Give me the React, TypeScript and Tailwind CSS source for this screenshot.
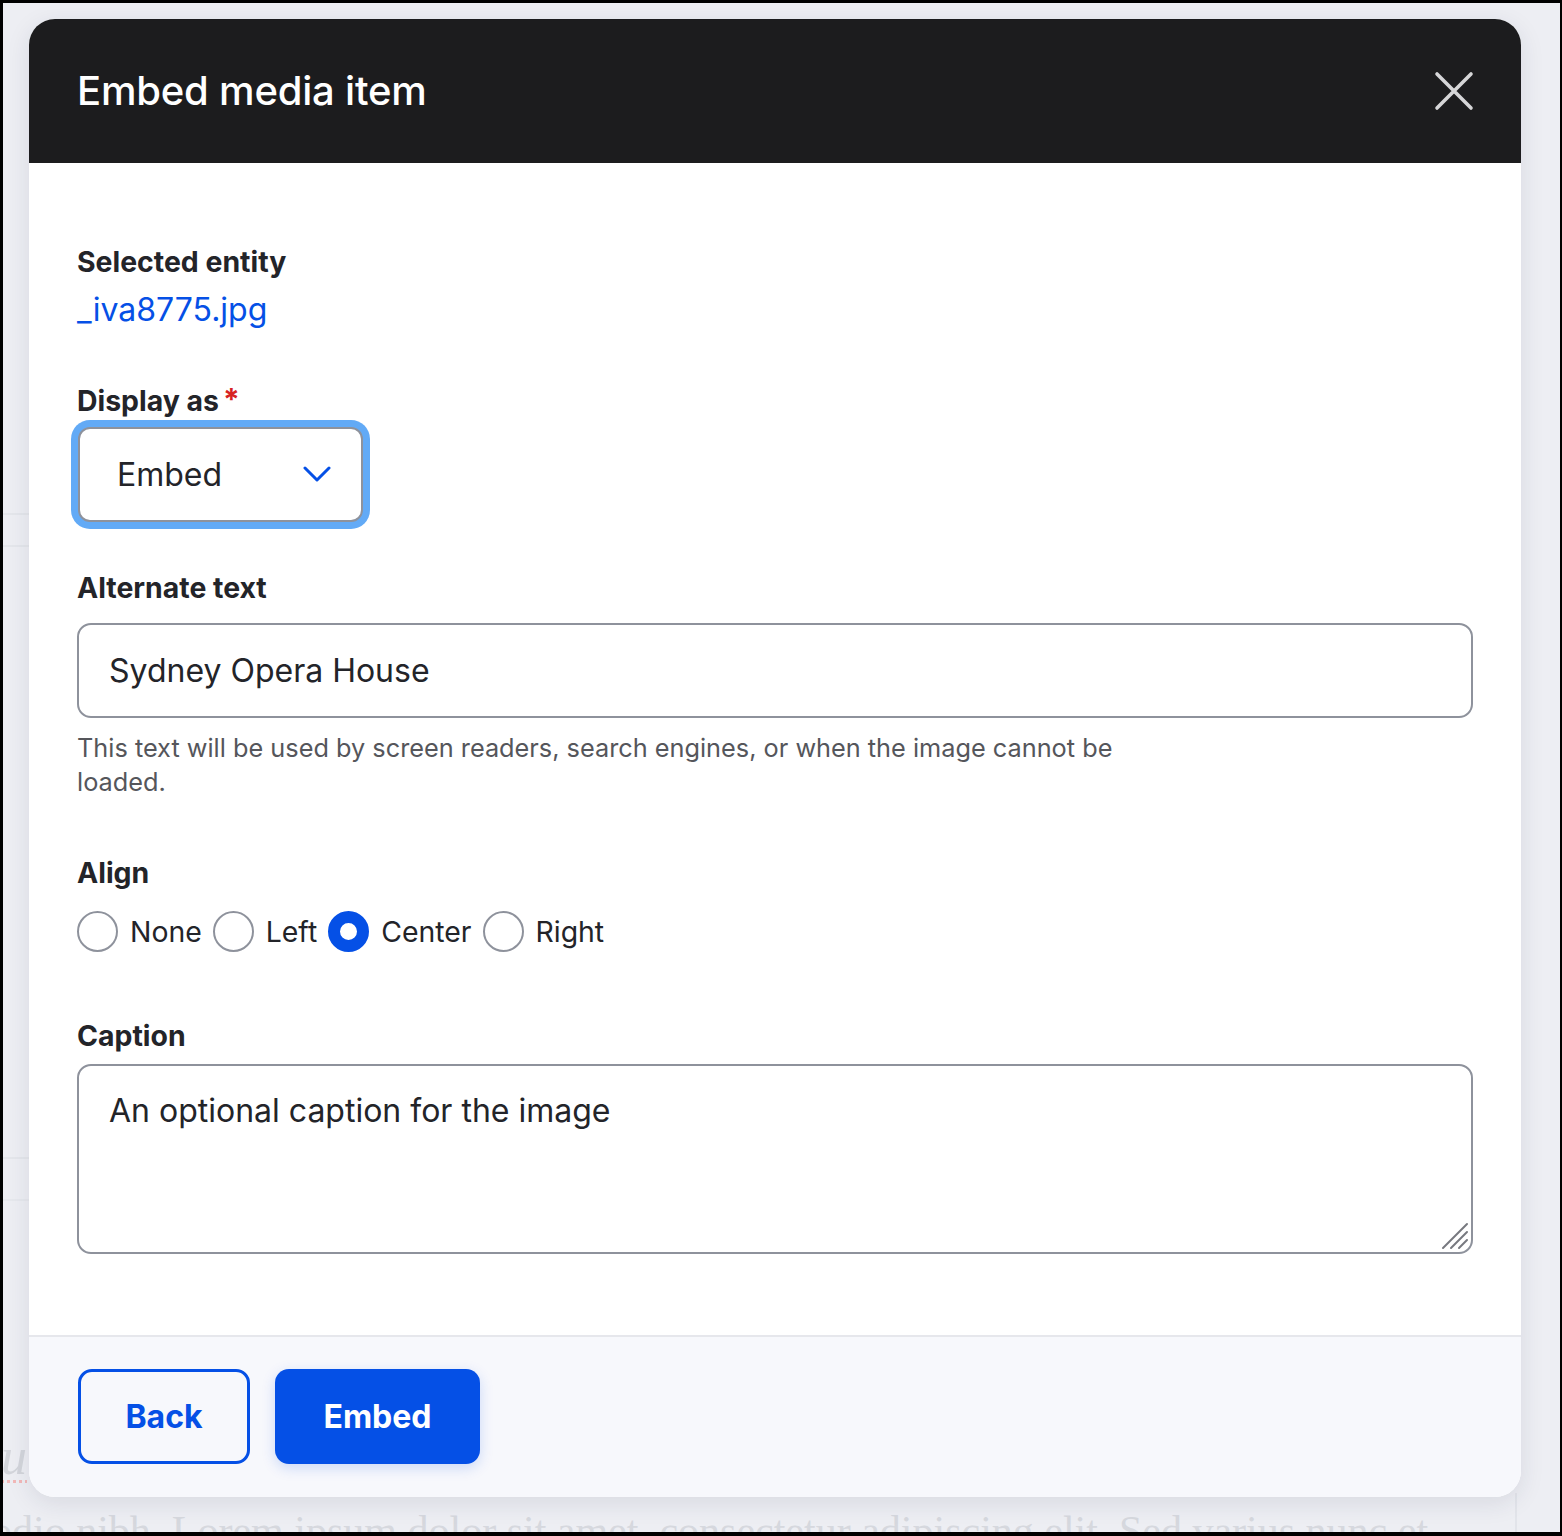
import React from "react";

const font = { fontFamily: "Inter, 'Noto Sans', sans-serif" };

function Radio({ label, checked }: { label: string; checked?: boolean }) {
  return (
    <label className="flex items-center gap-[12px]">
      <span
        className={
          checked
            ? "block w-[41px] h-[41px] rounded-full border-[12px] border-[#0550e6] bg-white"
            : "block w-[41px] h-[41px] rounded-full border-2 border-[#8e929c] bg-white"
        }
      />
      <span className="text-[28.4px] leading-[41px] text-[#232429]">{label}</span>
    </label>
  );
}

export default function App() {
  return (
    <div className="w-[1562px] h-[1536px] bg-black pt-[3px] pl-[3px] pr-[2px] pb-[4px]" style={font}>
      <div className="relative w-full h-full bg-[#edeef3] overflow-hidden">
        {/* faint page behind the overlay */}
        <div className="absolute left-0 top-[510px] w-[26px] h-[2px] bg-[#e4e6eb]" />
        <div className="absolute left-0 top-[542px] w-[26px] h-[2px] bg-[#e4e6eb]" />
        <div className="absolute left-0 top-[1154px] w-[26px] h-[2px] bg-[#e4e6eb]" />
        <div className="absolute left-0 top-[1196px] w-[26px] h-[2px] bg-[#e6e8ed]" />
        <div className="absolute left-[1512px] top-[1490px] w-[2px] h-[60px] bg-[#e2e4ea]" />
        <div
          className="absolute left-[-2px] top-[1424px] text-[52px] leading-[60px] italic text-[#d3d5db] underline decoration-dotted decoration-[#f2b8b8] decoration-[3px] underline-offset-[6px]"
          style={{ fontFamily: "'Liberation Serif', serif" }}
        >
          u
        </div>
        <div
          className="absolute left-[-12px] top-[1503px] whitespace-nowrap text-[42px] leading-[50px] text-[#d6d8de]"
          style={{ fontFamily: "'Liberation Serif', 'DejaVu Serif', serif" }}
        >
          odio nibh. Lorem ipsum dolor sit amet, consectetur adipiscing elit. Sed varius nunc et
        </div>

        {/* modal */}
        <div className="relative ml-[26px] mt-[16px] w-[1492px] h-[1478px] rounded-[26px] bg-white shadow-[0_6px_24px_rgba(30,40,70,0.10)] flex flex-col overflow-hidden">
          <div className="h-[144px] bg-[#1c1c1e] flex items-center justify-between pl-[48px] pr-[47px]">
            <h1 className="text-[40px] leading-[48px] font-medium text-white tracking-[-0.2px]">Embed media item</h1>
            <svg width="40" height="40" viewBox="0 0 40 40" className="text-[#d6d6d8]">
              <path d="M3 3 L37 37 M37 3 L3 37" stroke="currentColor" strokeWidth="3.6" strokeLinecap="round" />
            </svg>
          </div>

          <div className="flex-1 px-[48px] pt-[81px] flex flex-col items-start">
            <div className="text-[28.4px] leading-[36px] font-bold text-[#232429]">Selected entity</div>
            <a className="mt-[10px] text-[32px] leading-[40px] text-[#0550e6]">_iva8775.jpg</a>

            <div className="mt-[53px] flex items-start text-[28.4px] leading-[36px] font-bold text-[#232429]">
              Display as
              <span className="ml-[4px] text-[30px] leading-[30px] text-[#d72222] mt-[1px]">*</span>
            </div>
            <div className="mt-[8px] ml-[1px] w-[285px] h-[95px] rounded-[12px] border-2 border-[#8e929c] ring-[7px] ring-[#62aaf6] bg-white flex items-center justify-between pl-[37px] pr-[30px]">
              <span className="text-[32px] leading-[40px] text-[#232429]">Embed</span>
              <svg width="28" height="17" viewBox="0 0 28 17">
                <path d="M2 2 L14 14 L26 2" fill="none" stroke="#0550e6" strokeWidth="3" strokeLinecap="round" strokeLinejoin="round" />
              </svg>
            </div>

            <div className="mt-[48px] text-[28.4px] leading-[36px] font-bold text-[#232429]">Alternate text</div>
            <div className="mt-[17px] w-full h-[95px] rounded-[14px] border-2 border-[#8e929c] flex items-center pl-[30px]">
              <span className="text-[32px] leading-[40px] text-[#232429]">Sydney Opera House</span>
            </div>
            <div className="mt-[13px] text-[25.3px] leading-[34px] text-[#55565b]">
              This text will be used by screen readers, search engines, or when the image cannot be
              <br />
              loaded.
            </div>

            <div className="mt-[56px] text-[28.4px] leading-[36px] font-bold text-[#232429]">Align</div>
            <div className="mt-[20px] flex items-center gap-[11px]">
              <Radio label="None" />
              <Radio label="Left" />
              <Radio label="Center" checked />
              <Radio label="Right" />
            </div>

            <div className="mt-[66px] text-[28.4px] leading-[36px] font-bold text-[#232429]">Caption</div>
            <div className="relative mt-[10px] w-full h-[190px] rounded-[14px] border-2 border-[#8e929c] pl-[30px] pt-[25px]">
              <span className="text-[32px] leading-[40px] text-[#232429]">An optional caption for the image</span>
              <svg className="absolute right-[2px] bottom-[2px]" width="28" height="28" viewBox="0 0 28 28">
                <path d="M26 2 L2 26 M26 10 L10 26 M26 18 L18 26" stroke="#77797f" strokeWidth="2" strokeLinecap="round" />
              </svg>
            </div>
          </div>

          <div className="h-[162px] border-t-2 border-[#e6e7ec] bg-[#f7f8fc] flex items-start gap-[25px] pl-[49px] pt-[32px]">
            <button className="w-[172px] h-[95px] rounded-[14px] border-[3px] border-[#0550e6] text-[32px] font-bold text-[#0550e6]">
              Back
            </button>
            <button className="w-[205px] h-[95px] rounded-[14px] bg-[#0550e6] text-[32px] font-bold text-white shadow-[0_4px_14px_rgba(5,80,230,0.18)]">
              Embed
            </button>
          </div>
        </div>
      </div>
    </div>
  );
}
